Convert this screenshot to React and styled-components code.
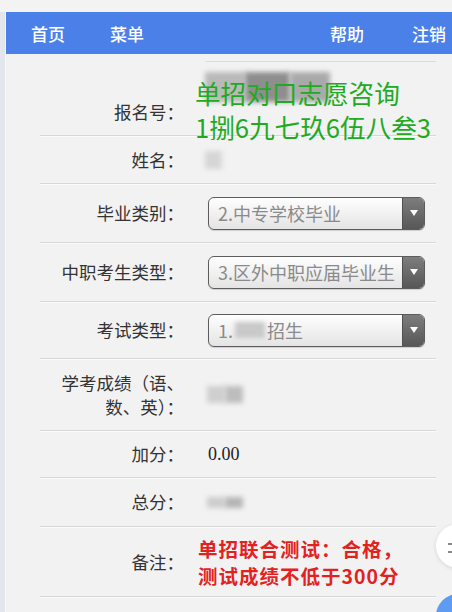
import React from "react";
import styled, { createGlobalStyle } from "styled-components";

const Global = createGlobalStyle`
  html, body { margin: 0; padding: 0; background: #f2f2f2; }
  body { font-family: "Noto Sans CJK SC", "Noto Sans", sans-serif; }
  * { box-sizing: border-box; }
`;

const Page = styled.div`
  width: 452px;
  height: 612px;
  overflow: hidden;
  position: relative;
  display: flex;
  flex-direction: column;
  background: #f2f2f2;
`;

const TopStrip = styled.div`
  height: 12px;
  background: #f3f3f4;
  flex: none;
`;

const Body = styled.div`
  flex: 1;
  display: flex;
`;

const LeftRail = styled.div`
  width: 6px;
  flex: none;
  background: #e3e7ec;
  border-right: 1px solid #f7f7f7;
`;

const Main = styled.div`
  flex: 1;
  display: flex;
  flex-direction: column;
`;

const NavBar = styled.nav`
  height: 42px;
  background: #4b80e8;
  display: flex;
  align-items: center;
  padding: 0 6px 0 25px;
`;

const NavItem = styled.span`
  color: #ffffff;
  font-size: 17px;
  font-weight: 500;
  line-height: 1;
  margin-right: ${(p) => p.$gap || 0}px;
  margin-left: ${(p) => (p.$push ? "auto" : "0")};
`;

const Form = styled.div`
  padding: 7px 16px 0 34px;
  display: flex;
  flex-direction: column;
`;

const TopLine = styled.div`
  height: 1px;
  margin: 0 0 0 165px;
  background: #dcdcdc;
`;

const Row = styled.div`
  position: relative;
  height: ${(p) => p.$h}px;
  display: grid;
  grid-template-columns: 144px 1fr;
  column-gap: 21px;
  align-items: center;
  border-bottom: 1px solid #d7d7d7;
  box-shadow: 0 1px 0 #fbfbfb;
`;

const Label = styled.div`
  text-align: right;
  font-size: 17.5px;
  line-height: ${(p) => p.$lh || 22}px;
  color: #333333;
  white-space: nowrap;
  align-self: ${(p) => (p.$top != null ? "start" : "center")};
  margin-top: ${(p) => (p.$top != null ? p.$top : 0)}px;
`;

const Value = styled.div`
  font-size: 17px;
  color: #333;
  display: flex;
  align-items: center;
`;

const Blur = styled.div`
  width: ${(p) => p.$w}px;
  height: ${(p) => p.$h}px;
  background: ${(p) => p.$c || "#c8c8c8"};
  filter: blur(2.5px);
  margin-left: ${(p) => p.$ml || 0}px;
`;

const BlurGroup = styled.div`
  display: flex;
  align-self: ${(p) => (p.$top != null ? "start" : "center")};
  margin-top: ${(p) => (p.$top != null ? p.$top : 0)}px;
`;

const Number = styled.span`
  font-family: "Liberation Serif", "DejaVu Serif", serif;
  font-size: 18px;
  color: #222;
  margin-left: 3px;
`;

const SelectBox = styled.div`
  width: 217px;
  height: 33px;
  margin-left: 3px;
  border: 1px solid #5c5c5c;
  border-radius: 6px;
  overflow: hidden;
  display: flex;
  background: linear-gradient(#fefefe, #e4e4e4);
  box-shadow: 0 1px 1px rgba(0, 0, 0, 0.15);
`;

const SelectText = styled.div`
  flex: 1;
  display: flex;
  align-items: center;
  padding-left: 9px;
  font-size: 18px;
  color: #8a8a8a;
  white-space: nowrap;
  overflow: hidden;
`;

const SelectArrow = styled.div`
  width: 22px;
  flex: none;
  background: linear-gradient(#7d7d7d, #575757);
  border-left: 1px solid #4f4f4f;
  display: flex;
  align-items: center;
  justify-content: center;
  &::after {
    content: "";
    border-left: 4px solid transparent;
    border-right: 4px solid transparent;
    border-top: 6px solid #ffffff;
  }
`;

const InlineBlur = styled.span`
  display: inline-block;
  width: ${(p) => p.$w}px;
  height: 16px;
  background: #c9c9c9;
  filter: blur(2px);
  margin: 0 2px;
`;

const GreenOverlay = styled.div`
  position: absolute;
  left: 155px;
  top: 14px;
  color: #20aa22;
  font-size: 25.6px;
  line-height: 34px;
  white-space: nowrap;
  pointer-events: none;
`;

const RedNote = styled.div`
  margin-left: -7px;
  color: #e3221f;
  font-size: 19.5px;
  font-weight: 700;
  letter-spacing: 1px;
  line-height: 27px;
  white-space: nowrap;
`;

const FloatWhite = styled.div`
  position: absolute;
  left: 436px;
  top: 524px;
  width: 44px;
  height: 44px;
  border-radius: 50%;
  background: #ffffff;
  box-shadow: 0 1px 4px rgba(0, 0, 0, 0.12);
  &::after {
    content: "";
    position: absolute;
    left: 12px;
    top: 19px;
    width: 5px;
    height: 6px;
    border-top: 2px solid #888;
    border-bottom: 2px solid #888;
  }
`;

const FloatBlue = styled.div`
  position: absolute;
  left: 436px;
  top: 594px;
  width: 44px;
  height: 44px;
  border-radius: 50%;
  background: #5d9cf2;
`;

const Select = ({ children }) => (
  <SelectBox>
    <SelectText>{children}</SelectText>
    <SelectArrow />
  </SelectBox>
);

export default function App() {
  return (
    <Page>
      <Global />
      <TopStrip />
      <Body>
        <LeftRail />
        <Main>
          <NavBar>
            <NavItem $gap={45}>首页</NavItem>
            <NavItem>菜单</NavItem>
            <NavItem $push $gap={48}>帮助</NavItem>
            <NavItem>注销</NavItem>
          </NavBar>
          <Form>
            <TopLine />
            <Row $h={74}>
              <Label $top={39}>报名号：</Label>
              <BlurGroup $top={10}>
                <Blur $w={40} $h={30} $c="#b9b9b9" />
                <Blur $w={45} $h={30} $c="#8e8e8e" />
                <Blur $w={40} $h={30} $c="#a9a9a9" />
              </BlurGroup>
              <GreenOverlay>
                单招对口志愿咨询
                <br />
                1捌6九七玖6伍八叁3
              </GreenOverlay>
            </Row>
            <Row $h={48}>
              <Label>姓名：</Label>
              <Value>
                <Blur $w={17} $h={18} $c="#d6d6d6" />
              </Value>
            </Row>
            <Row $h={59}>
              <Label>毕业类别：</Label>
              <Value>
                <Select>2.中专学校毕业</Select>
              </Value>
            </Row>
            <Row $h={59}>
              <Label>中职考生类型：</Label>
              <Value>
                <Select>3.区外中职应届毕业生</Select>
              </Value>
            </Row>
            <Row $h={57}>
              <Label>考试类型：</Label>
              <Value>
                <Select>
                  1.<InlineBlur $w={30} />招生
                </Select>
              </Value>
            </Row>
            <Row $h={72}>
              <Label $lh={24}>
                学考成绩（语、
                <br />
                数、英）：
              </Label>
              <Value>
                <BlurGroup>
                  <Blur $w={18} $h={17} $c="#cfcfcf" $ml={2} />
                  <Blur $w={18} $h={17} $c="#bdbdbd" />
                </BlurGroup>
              </Value>
            </Row>
            <Row $h={47}>
              <Label>加分：</Label>
              <Value>
                <Number>0.00</Number>
              </Value>
            </Row>
            <Row $h={49}>
              <Label>总分：</Label>
              <Value>
                <BlurGroup>
                  <Blur $w={18} $h={11} $c="#cdcdcd" $ml={2} />
                  <Blur $w={18} $h={11} $c="#b5b5b5" />
                </BlurGroup>
              </Value>
            </Row>
            <Row $h={70}>
              <Label>备注：</Label>
              <RedNote>
                单招联合测试：合格，
                <br />
                测试成绩不低于300分
              </RedNote>
            </Row>
          </Form>
        </Main>
      </Body>
      <FloatWhite />
      <FloatBlue />
    </Page>
  );
}
